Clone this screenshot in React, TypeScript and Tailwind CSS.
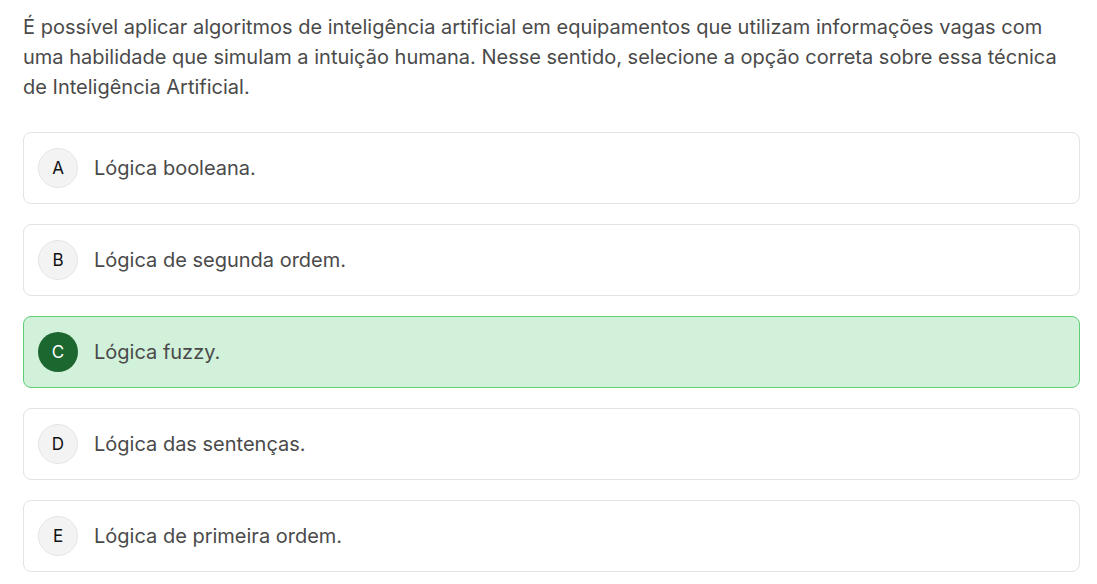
import React from "react";

const options = [
  { letter: "A", text: "Lógica booleana." },
  { letter: "B", text: "Lógica de segunda ordem." },
  { letter: "C", text: "Lógica fuzzy.", correct: true },
  { letter: "D", text: "Lógica das sentenças." },
  { letter: "E", text: "Lógica de primeira ordem." },
];

const App = () => {
  return (
    <div className="bg-white min-h-screen px-[23px] pt-[12px] font-['Inter',sans-serif]">
      <p className="text-[20px] leading-[30px] text-[#4a4a4a] w-[1057px]">
        É possível aplicar algoritmos de inteligência artificial em equipamentos que utilizam
        informações vagas com uma habilidade que simulam a intuição humana. Nesse sentido,
        selecione a opção correta sobre essa técnica de Inteligência Artificial.
      </p>
      <div className="mt-[30px] flex flex-col gap-[20px] w-[1057px]">
        {options.map((o) => (
          <div
            key={o.letter}
            className={
              o.correct
                ? "h-[72px] flex items-center gap-[16px] px-[14px] rounded-lg border border-[#5fcf75] bg-[#d1f1da]"
                : "h-[72px] flex items-center gap-[16px] px-[14px] rounded-lg border border-[#e3e3e3] bg-white"
            }
          >
            <div
              className={
                o.correct
                  ? "w-[40px] h-[40px] pt-[2px] rounded-full flex items-center justify-center bg-[#1c662f] text-white text-[17px]"
                  : "w-[40px] h-[40px] pt-[2px] rounded-full flex items-center justify-center bg-[#f3f3f3] border border-[#e5e5e5] text-[#111] text-[17px]"
              }
            >
              {o.letter}
            </div>
            <span className="text-[20px] text-[#4a4a4a]">{o.text}</span>
          </div>
        ))}
      </div>
    </div>
  );
};

export default App;
